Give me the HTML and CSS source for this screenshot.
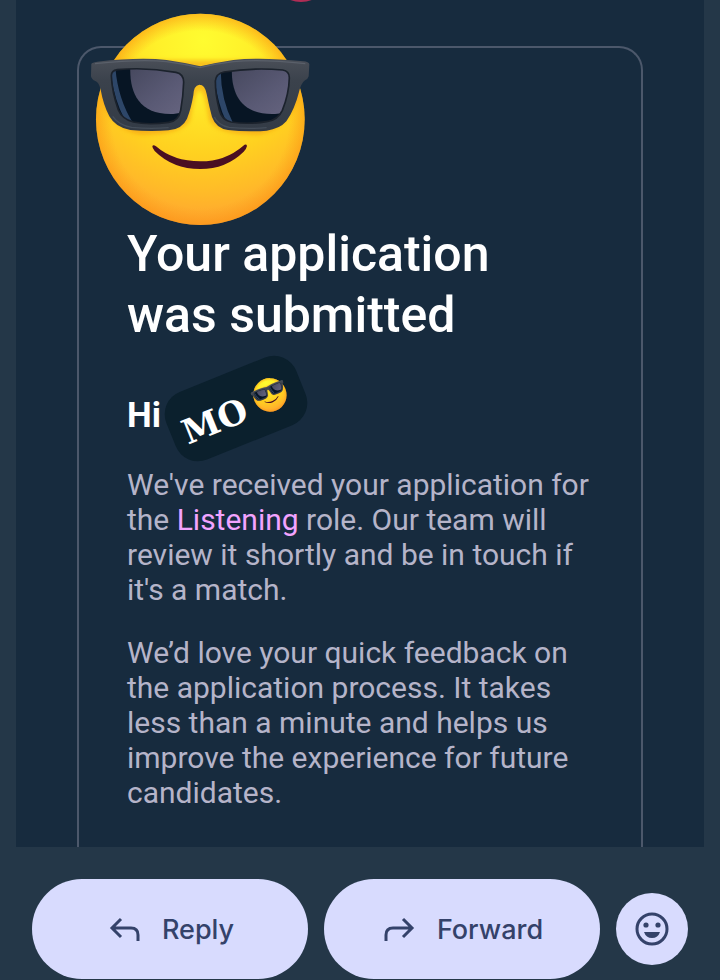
FILE: index.html
```
<!DOCTYPE html>
<html lang="en">
<head>
  <meta charset="UTF-8" />
  <title>Your application was submitted</title>
  <meta name="viewport" content="width=device-width, initial-scale=1.0" />
  <link rel="stylesheet" href="styles.css">
</head>
<body>

<main class="mail">
  <div class="logo-dot"></div>

  <article class="card">
    <svg class="sticker" viewBox="60 38 660 636" aria-hidden="true">
      <defs>
        <radialGradient id="face" gradientUnits="userSpaceOnUse" cx="400" cy="120" r="570">
          <stop offset="0" stop-color="#fffc30" />
          <stop offset="0.25" stop-color="#fff02a" />
          <stop offset="0.6" stop-color="#ffd120" />
          <stop offset="0.8" stop-color="#ffbb28" />
          <stop offset="1" stop-color="#ffa032" />
        </radialGradient>
        <radialGradient id="edge" gradientUnits="userSpaceOnUse" cx="391" cy="357" r="316">
          <stop offset="0.84" stop-color="#fb9a18" stop-opacity="0" />
          <stop offset="1" stop-color="#fb9210" stop-opacity="0.55" />
        </radialGradient>
        <linearGradient id="frame" x1="0" y1="0" x2="0" y2="1">
          <stop offset="0" stop-color="#4a4f58" />
          <stop offset="0.3" stop-color="#3b424c" />
          <stop offset="1" stop-color="#333b46" />
        </linearGradient>
        <linearGradient id="shine" x1="0" y1="0" x2="1" y2="1">
          <stop offset="0" stop-color="#46485e" />
          <stop offset="0.6" stop-color="#5a5a75" />
          <stop offset="1" stop-color="#66647f" />
        </linearGradient>
        <filter id="soft" x="-20%" y="-20%" width="140%" height="140%">
          <feGaussianBlur stdDeviation="7" />
        </filter>
        <clipPath id="lens-left">
          <path d="M142 208 Q230 200 318 216 Q341 221 341 245 Q340 285 332 330 Q326 362 296 366 Q235 375 190 365 Q156 356 145 329 Q126 275 124 226 Q124 211 142 208Z" />
        </clipPath>
        <clipPath id="lens-right">
          <path d="M462 215 Q550 201 638 209 Q658 212 658 232 Q657 280 637 330 Q624 359 590 364 Q535 373 483 365 Q455 359 448 329 Q436 282 436 242 Q438 220 462 215Z" />
        </clipPath>
        <g id="cool">
          <ellipse cx="391" cy="357" rx="313" ry="317" fill="url(#face)" />
          <path d="M95 290 Q120 385 210 402 Q330 405 360 360 Q389 180 418 360 Q445 405 570 402 Q655 385 688 285 L640 180 L140 180Z" fill="#f08c10" opacity="0.5" filter="url(#soft)" />
          <ellipse cx="391" cy="357" rx="313" ry="317" fill="url(#edge)" />
          <path d="M247 438 Q249 431 258 438 Q310 483 391 483 Q466 483 520 436 Q529 429 531 437 Q530 444 521 454 Q468 506 391 506 Q308 506 254 452 Q247 444 247 438Z" fill="#4a0f22" />
          <path d="M64 191 Q66 186 82 184 Q210 170 290 179 Q345 187 391 198 Q437 187 490 179 Q575 170 700 183 Q716 184 718 192 L716 228 Q713 238 705 240 Q693 249 687 275 Q674 327 649 363 Q629 386 590 391 Q530 396 474 389 Q438 384 426 350 Q417 317 410 281 Q405 253 388 253 Q371 255 370 285 Q363 326 351 355 Q337 386 296 390 Q240 395 181 389 Q137 382 118 348 Q100 313 92 268 Q87 246 76 242 Q65 238 63 228Z" fill="url(#frame)" />
          <path d="M75 190 Q210 176 289 184 Q342 191 389 202 Q439 190 490 184 Q575 176 706 190" fill="none" stroke="#5a606a" stroke-width="4" />
          <g clip-path="url(#lens-left)">
            <rect x="110" y="190" width="250" height="190" fill="#071524" />
            <path d="M120 200 Q130 295 163 355 L190 370 Q143 295 136 200Z" fill="#2d4668" />
            <path d="M181 200 C178 275 205 345 310 341 L345 335 L345 200Z" fill="url(#shine)" />
          </g>
          <g clip-path="url(#lens-right)">
            <rect x="425" y="190" width="250" height="190" fill="#071524" />
            <path d="M432 215 Q439 300 467 360 L490 370 Q453 300 452 210Z" fill="#2d4668" />
            <path d="M486 200 C482 275 510 345 615 341 L670 335 L670 200Z" fill="url(#shine)" />
          </g>
          <g fill="none" stroke="#1b222c" stroke-width="5">
            <path d="M142 208 Q230 200 318 216 Q341 221 341 245 Q340 285 332 330 Q326 362 296 366 Q235 375 190 365 Q156 356 145 329 Q126 275 124 226 Q124 211 142 208Z" />
            <path d="M462 215 Q550 201 638 209 Q658 212 658 232 Q657 280 637 330 Q624 359 590 364 Q535 373 483 365 Q455 359 448 329 Q436 282 436 242 Q438 220 462 215Z" />
          </g>
          <path d="M128 348 Q148 376 185 381 Q240 387 296 382 M433 350 Q445 376 478 381 Q535 387 590 382" fill="none" stroke="#454e5a" stroke-width="4" />
        </g>
      </defs>
      <use href="#cool" />
    </svg>

    <h1 class="title">Your application<br>was submitted</h1>

    <div class="greeting">
      <span class="hi">Hi</span>
      <span class="name-tag">
        <span class="name">MO</span>
        <svg class="name-emoji" viewBox="60 38 660 636" aria-hidden="true"><use href="#cool" /></svg>
      </span>
    </div>

    <p>We've received your application for the <a class="role" href="#">Listening</a> role. Our team will review it shortly and be in touch if it's a match.</p>
    <p>We’d love your quick feedback on the application process. It takes less than a minute and helps us improve the experience for future candidates.</p>
  </article>
</main>

<footer class="actions">
  <button class="action" type="button">
    <svg class="icon" viewBox="0 0 36 36" aria-hidden="true">
      <path d="M15 8 L6 17 L15 26 M6 17 H25 Q32 17 32 24 V30" />
    </svg>
    Reply
  </button>
  <button class="action" type="button">
    <svg class="icon" viewBox="0 0 36 36" aria-hidden="true">
      <path d="M22 8 L31 17 L22 26 M31 17 H12 Q5 17 5 24 V30" />
    </svg>
    Forward
  </button>
  <button class="react" type="button" aria-label="Add reaction">
    <svg class="icon" viewBox="0 0 36 36" aria-hidden="true">
      <circle cx="18" cy="18" r="15" />
      <g class="solid">
        <circle cx="12" cy="14" r="2.6" />
        <circle cx="24" cy="14" r="2.6" />
        <path d="M10 21 H26 Q24 27 18 27 Q12 27 10 21Z" />
      </g>
    </svg>
  </button>
</footer>

</body>
</html>
```
FILE: styles.css
```
* {
  box-sizing: border-box;
  margin: 0;
  padding: 0;
}

body {
  background: #243748;
  font-family: Roboto, sans-serif;
}

.mail {
  position: relative;
  margin: 0 16px;
  padding: 46px 61px 0;
  background: #172b3e;
  overflow: hidden;
}

/* Tail of the logo above the card */
.logo-dot {
  position: absolute;
  top: -58px;
  left: 255px;
  width: 60px;
  height: 60px;
  border-radius: 50%;
  background: #b02d55;
}

.card {
  padding: 0 48px 37px;
  border: 2px solid #4c586b;
  border-bottom: none;
  border-radius: 24px 24px 0 0;
  color: #b5b4c9;
  font-size: 30px;
  line-height: 35px;
}

/* Sticker hangs over the top left corner */
.sticker {
  display: block;
  width: 220px;
  height: 212px;
  margin: -35px 0 -1px -37px;
}

.title {
  color: #fff;
  font-size: 50px;
  font-weight: 500;
  line-height: 61px;
}

.greeting {
  display: flex;
  align-items: center;
  gap: 5px;
  margin: 26px 0 22px;
}

.hi {
  padding-top: 14px;
  color: #fff;
  font-size: 35px;
  font-weight: 700;
}

.name-tag {
  display: flex;
  align-items: center;
  gap: 10px;
  height: 73px;
  padding: 0 16px 0 12px;
  border-radius: 24px;
  background: #0b202d;
  transform: rotate(-22deg);
}

.name {
  padding-top: 8px;
  color: #fff;
  font-family: "DejaVu Serif", serif;
  font-size: 34px;
  font-weight: 700;
}

.name-emoji {
  width: 35px;
  height: 35px;
}

.card p + p {
  margin-top: 28px;
}

.role {
  color: #f2a3ff;
  text-decoration: none;
}

.actions {
  display: flex;
  align-items: center;
  gap: 16px;
  padding: 32px 32px 1px;
}

.action,
.react {
  display: flex;
  align-items: center;
  justify-content: center;
  border: none;
  background: #d8dbfe;
  color: #34426a;
  cursor: pointer;
}

.action {
  flex: 1;
  gap: 20px;
  height: 100px;
  border-radius: 50px;
  font-family: Inter, sans-serif;
  font-size: 27px;
  font-weight: 500;
}

.react {
  width: 72px;
  height: 72px;
  border-radius: 50%;
}

.icon {
  width: 36px;
  height: 36px;
  fill: none;
  stroke: currentColor;
  stroke-width: 3;
}

.solid {
  fill: currentColor;
  stroke: none;
}
```
